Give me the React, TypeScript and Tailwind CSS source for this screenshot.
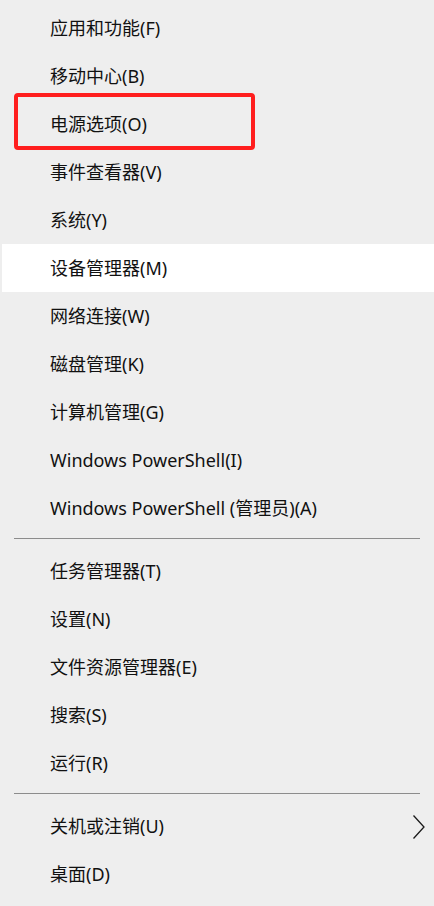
const groups: { label: string; hot?: boolean; arrow?: boolean }[][] = [
  [
    { label: "应用和功能(F)" },
    { label: "移动中心(B)" },
    { label: "电源选项(O)" },
    { label: "事件查看器(V)" },
    { label: "系统(Y)" },
    { label: "设备管理器(M)", hot: true },
    { label: "网络连接(W)" },
    { label: "磁盘管理(K)" },
    { label: "计算机管理(G)" },
    { label: "Windows PowerShell(I)" },
    { label: "Windows PowerShell (管理员)(A)" },
  ],
  [
    { label: "任务管理器(T)" },
    { label: "设置(N)" },
    { label: "文件资源管理器(E)" },
    { label: "搜索(S)" },
    { label: "运行(R)" },
  ],
  [{ label: "关机或注销(U)", arrow: true }, { label: "桌面(D)" }],
];

function Row({ label, hot, arrow }: { label: string; hot?: boolean; arrow?: boolean }) {
  return (
    <div
      className={`relative flex h-[48px] items-center pl-[48px] ml-[2px] ${hot ? "bg-white" : ""}`}
    >
      <span className="text-[18px] leading-none text-[#111]">{label}</span>
      {arrow && (
        <svg className="absolute right-[8px] top-[12px]" width="14" height="26" viewBox="0 0 14 26">
          <path d="M1.5 1.5 L12 13 L1.5 24.5" fill="none" stroke="#1a1a1a" strokeWidth="1.3" />
        </svg>
      )}
    </div>
  );
}

export default function App() {
  return (
    <div
      className="relative w-[434px] h-[906px] bg-[#eeeeee] pt-[4px] overflow-hidden"
      style={{ fontFamily: '"Noto Sans", "Noto Sans CJK SC", sans-serif' }}
    >
      {groups.map((g, i) => (
        <div key={i}>
          {i > 0 && <div className="mx-[14px] mt-[6px] mb-[8px] h-px bg-[#8c8c8c]" />}
          {g.map((r) => (
            <Row key={r.label} {...r} />
          ))}
        </div>
      ))}
      {/* red highlight frame */}
      <div className="absolute left-[14px] top-[93px] w-[241px] h-[57px] rounded-[4px] border-[4px] border-[#ff1e1e]" />
    </div>
  );
}
